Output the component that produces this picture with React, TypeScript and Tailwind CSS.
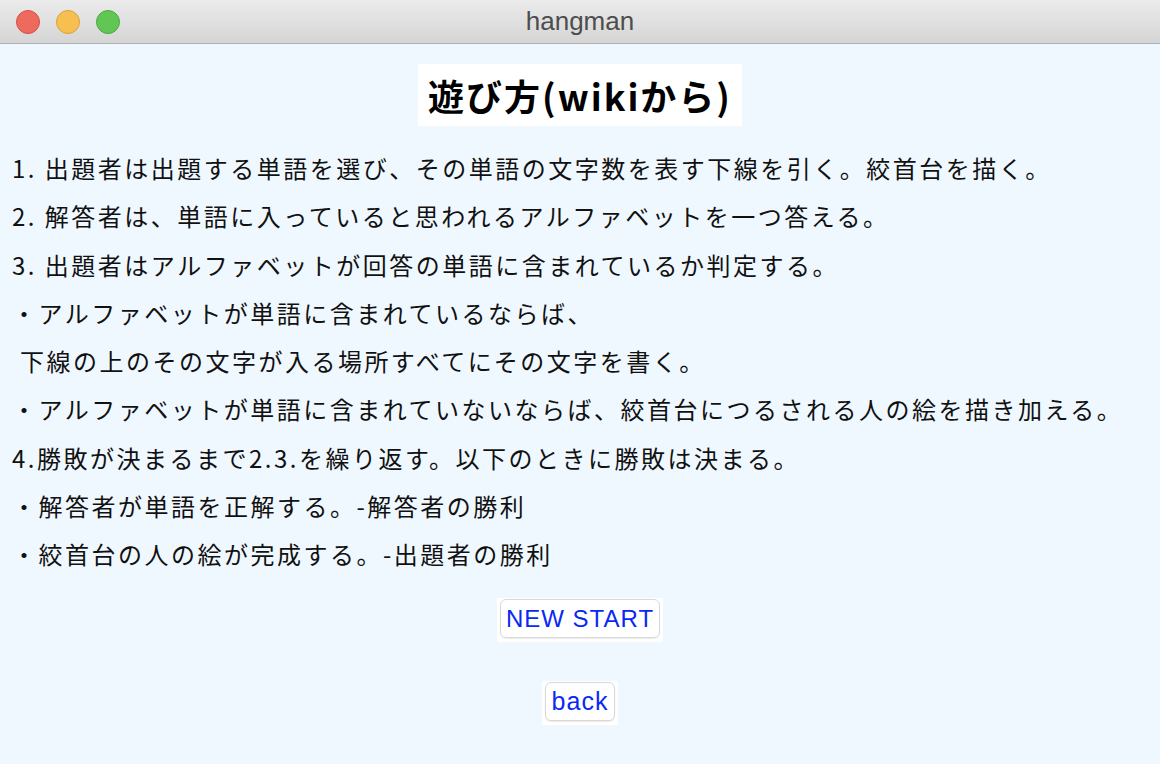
import React from 'react';

const lines = [
  '1. 出題者は出題する単語を選び、その単語の文字数を表す下線を引く。絞首台を描く。',
  '2. 解答者は、単語に入っていると思われるアルファベットを一つ答える。',
  '3. 出題者はアルファベットが回答の単語に含まれているか判定する。',
  '・アルファベットが単語に含まれているならば、',
  ' 下線の上のその文字が入る場所すべてにその文字を書く。',
  '・アルファベットが単語に含まれていないならば、絞首台につるされる人の絵を描き加える。',
  '4.勝敗が決まるまで2.3.を繰り返す。以下のときに勝敗は決まる。',
  '・解答者が単語を正解する。-解答者の勝利',
  '・絞首台の人の絵が完成する。-出題者の勝利',
];

const App: React.FC = () => {
  return (
    <div className="w-[1160px] h-[764px] flex flex-col bg-[#f0f8ff] overflow-hidden font-['Noto_Sans_CJK_JP',sans-serif]">
      {/* Window title bar */}
      <div className="h-[44px] shrink-0 relative flex items-center justify-center bg-gradient-to-b from-[#ebebeb] to-[#d5d5d5] border-b border-[#b1b1b1]">
        <div className="absolute left-[16px] top-[10px] flex gap-[16px]">
          <span className="w-[24px] h-[24px] rounded-full bg-[#ee6a5e] border border-[#d55046]" />
          <span className="w-[24px] h-[24px] rounded-full bg-[#f6bf4f] border border-[#d9a23b]" />
          <span className="w-[24px] h-[24px] rounded-full bg-[#62c655] border border-[#4ea942]" />
        </div>
        <span className="text-[26px] text-[#4d4d4d] font-['Liberation_Sans',sans-serif]">hangman</span>
      </div>

      {/* Title */}
      <div className="flex justify-center mt-[20px]">
        <h1 className="bg-white h-[62px] px-[10px] flex items-center text-[36px] font-bold text-black tracking-[2px]">
          遊び方(wikiから)
        </h1>
      </div>

      {/* Rules */}
      <div className="mt-[18px] pl-[12px] text-[24px] tracking-[2.5px] text-[#111]">
        {lines.map((l, i) => (
          <p key={i} className="h-[48.25px] leading-[48.25px] whitespace-pre">
            {l}
          </p>
        ))}
      </div>

      {/* Buttons */}
      <div className="flex flex-col items-center mt-[20px] gap-[39px]">
        <div className="bg-white px-[3px] pt-[1px] pb-[4px]">
          <button className="h-[39px] px-[5px] rounded-[6px] border border-[#d8d8d8] shadow-[0_1px_1px_rgba(0,0,0,0.08)] text-[24px] leading-none text-[#0a28f5] tracking-[1px] font-['Liberation_Sans',sans-serif]">
            NEW START
          </button>
        </div>
        <div className="bg-white px-[3px] pt-[1px] pb-[4px]">
          <button className="h-[39px] px-[6px] rounded-[6px] border border-[#d8d8d8] shadow-[0_1px_1px_rgba(0,0,0,0.08)] text-[25px] leading-none text-[#0a28f5] tracking-[1px] font-['Liberation_Sans',sans-serif]">
            back
          </button>
        </div>
      </div>
    </div>
  );
};

export default App;
